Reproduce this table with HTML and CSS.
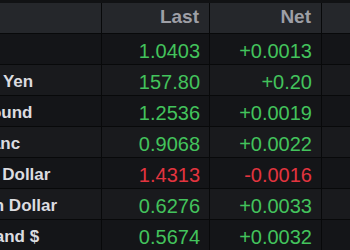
FILE: index.html
```html
<!DOCTYPE html>
<html>
<head>
<meta charset="utf-8">
<link rel="stylesheet" href="styles.css">
</head>
<body>
<div class="table">
  <div class="row head">
    <div class="cell name"></div>
    <div class="cell num">Last</div>
    <div class="cell num">Net</div>
    <div class="cell rest"></div>
  </div>
  <div class="row">
    <div class="cell name"><span class="label">Euro</span></div>
    <div class="cell num up">1.0403</div>
    <div class="cell num up">+0.0013</div>
    <div class="cell rest"></div>
  </div>
  <div class="row">
    <div class="cell name"><span class="label">Japanese Yen</span></div>
    <div class="cell num up">157.80</div>
    <div class="cell num up">+0.20</div>
    <div class="cell rest"></div>
  </div>
  <div class="row">
    <div class="cell name"><span class="label">British Pound</span></div>
    <div class="cell num up">1.2536</div>
    <div class="cell num up">+0.0019</div>
    <div class="cell rest"></div>
  </div>
  <div class="row">
    <div class="cell name"><span class="label">Swiss Franc</span></div>
    <div class="cell num up">0.9068</div>
    <div class="cell num up">+0.0022</div>
    <div class="cell rest"></div>
  </div>
  <div class="row">
    <div class="cell name"><span class="label">Canadian Dollar</span></div>
    <div class="cell num down">1.4313</div>
    <div class="cell num down">-0.0016</div>
    <div class="cell rest"></div>
  </div>
  <div class="row">
    <div class="cell name"><span class="label">Australian Dollar</span></div>
    <div class="cell num up">0.6276</div>
    <div class="cell num up">+0.0033</div>
    <div class="cell rest"></div>
  </div>
  <div class="row">
    <div class="cell name"><span class="label">New Zealand $</span></div>
    <div class="cell num up">0.5674</div>
    <div class="cell num up">+0.0032</div>
    <div class="cell rest"></div>
  </div>
</div>
</body>
</html>
```

FILE: styles.css
```css
html, body {
  margin: 0;
  padding: 0;
  background: #111214;
  width: 350px;
  height: 250px;
  overflow: hidden;
}
.table {
  padding-top: 3px;
  font-family: "Liberation Sans", Arial, sans-serif;
}
.row {
  display: grid;
  grid-template-columns: 102px 108px 112px 1fr;
  height: 31px;
  border-bottom: 1px solid #08090a;
  box-sizing: border-box;
  background: #141518;
}
.row:nth-child(odd) {
  background: #191a1d;
}
.row.head {
  height: 31px;
  background: #25272b;
}
.cell {
  border-right: 1px solid #08090a;
  box-sizing: border-box;
  overflow: hidden;
  white-space: nowrap;
  padding-top: 4px;
  line-height: 26px;
}
.rest {
  border-right: none;
}
.name {
  font-size: 17px;
  font-weight: bold;
  color: #dcdce0;
}
.label {
  display: inline-block;
  margin-left: -79px;
}
.num {
  text-align: right;
  padding-right: 9px;
  font-size: 20px;
}
.head .num {
  font-size: 19px;
  font-weight: bold;
  color: #9e9fa6;
  padding-top: 1px;
  padding-right: 10px;
}
.up {
  color: #43c35c;
}
.down {
  color: #e3343f;
}
```
